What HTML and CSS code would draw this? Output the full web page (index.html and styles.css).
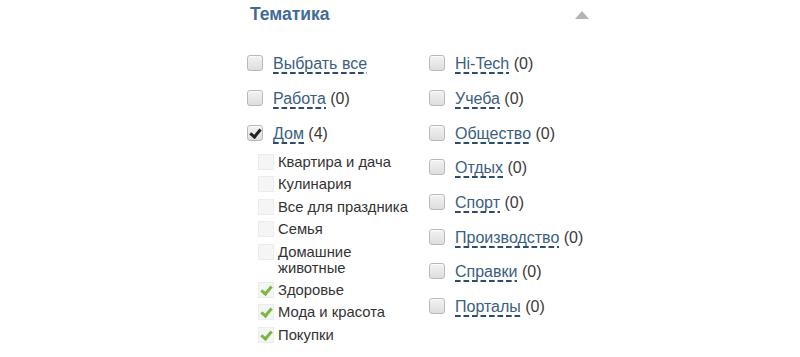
FILE: index.html
```html
<!DOCTYPE html>
<html lang="ru">
<head>
<meta charset="utf-8">
<link rel="stylesheet" href="styles.css">
</head>
<body>
<div class="panel">
  <div class="head">
    <span class="title">Тематика</span>
    <span class="arrow"></span>
  </div>
  <div class="cols">
    <div class="col col-left">
      <div class="row"><span class="cb"></span><span class="lbl"><a class="lnk">Выбрать все</a></span></div>
      <div class="row"><span class="cb"></span><span class="lbl"><a class="lnk">Работа</a> (0)</span></div>
      <div class="row"><span class="cb on"></span><span class="lbl"><a class="lnk">Дом</a> (4)</span></div>
      <div class="subs">
        <div class="sub"><span class="scb"></span><span class="slbl">Квартира и дача</span></div>
        <div class="sub"><span class="scb"></span><span class="slbl">Кулинария</span></div>
        <div class="sub"><span class="scb"></span><span class="slbl">Все для праздника</span></div>
        <div class="sub"><span class="scb"></span><span class="slbl">Семья</span></div>
        <div class="sub"><span class="scb"></span><span class="slbl">Домашние<br>животные</span></div>
        <div class="sub"><span class="scb on"></span><span class="slbl">Здоровье</span></div>
        <div class="sub"><span class="scb on"></span><span class="slbl">Мода и красота</span></div>
        <div class="sub"><span class="scb on"></span><span class="slbl">Покупки</span></div>
      </div>
    </div>
    <div class="col col-right">
      <div class="row"><span class="cb"></span><span class="lbl"><a class="lnk">Hi-Tech</a> (0)</span></div>
      <div class="row"><span class="cb"></span><span class="lbl"><a class="lnk">Учеба</a> (0)</span></div>
      <div class="row"><span class="cb"></span><span class="lbl"><a class="lnk">Общество</a> (0)</span></div>
      <div class="row"><span class="cb"></span><span class="lbl"><a class="lnk">Отдых</a> (0)</span></div>
      <div class="row"><span class="cb"></span><span class="lbl"><a class="lnk">Спорт</a> (0)</span></div>
      <div class="row"><span class="cb"></span><span class="lbl"><a class="lnk">Производство</a> (0)</span></div>
      <div class="row"><span class="cb"></span><span class="lbl"><a class="lnk">Справки</a> (0)</span></div>
      <div class="row"><span class="cb"></span><span class="lbl"><a class="lnk">Порталы</a> (0)</span></div>
    </div>
  </div>
</div>
</body>
</html>
```
FILE: styles.css
```css
html, body {
  margin: 0;
  padding: 0;
  background: #fff;
}
body {
  font-family: "Liberation Sans", Arial, sans-serif;
  color: #333;
}
.panel {
  width: 352px;
  margin-left: 247px;
}
.head {
  display: flex;
  align-items: center;
  justify-content: space-between;
  height: 28px;
  padding-left: 3px;
}
.title {
  font-size: 17.5px;
  font-weight: bold;
  color: #3f6b96;
}
.arrow {
  width: 0;
  height: 0;
  border-left: 7px solid transparent;
  border-right: 7px solid transparent;
  border-bottom: 8px solid #b3b3b3;
  margin-right: 10px;
  margin-top: 2px;
}
.cols {
  display: flex;
  padding-top: 18px;
}
.col-left {
  width: 182px;
}
.row {
  display: flex;
  align-items: center;
  height: 34.7px;
  font-size: 16px;
}
.cb {
  box-sizing: border-box;
  width: 16px;
  height: 16px;
  border: 1px solid #b9b9b9;
  border-radius: 3px;
  background: linear-gradient(#f2f2f2, #dedede);
  box-shadow: inset 0 1px 1px rgba(255,255,255,0.8);
  margin-right: 10px;
  position: relative;
  flex: none;
}
.cb.on::after {
  content: "";
  position: absolute;
  left: 4px;
  top: 1px;
  width: 4px;
  height: 8px;
  border-right: 3px solid #222;
  border-bottom: 3px solid #222;
  transform: rotate(40deg);
}
.lbl {
  color: #3a3a3a;
  line-height: 18px;
  margin-top: 2px;
}
.lnk {
  color: #3a5e82;
  text-decoration: none;
  padding-bottom: 2px;
  background-image: linear-gradient(to right, #2c4d6e 65%, transparent 65%);
  background-size: 8.5px 2px;
  background-repeat: repeat-x;
  background-position: 0 100%;
}
.subs {
  padding-left: 11px;
  padding-top: 4px;
}
.sub {
  display: flex;
  align-items: flex-start;
  font-size: 14.8px;
  line-height: 16px;
  margin-bottom: 6.4px;
}
.scb {
  box-sizing: border-box;
  width: 16px;
  height: 16px;
  border: 1px solid #ececec;
  background: #f5f5f5;
  margin-right: 4px;
  position: relative;
  flex: none;
}
.scb.on::after {
  content: "";
  position: absolute;
  left: 4px;
  top: 1px;
  width: 4px;
  height: 8px;
  border-right: 3px solid #78b843;
  border-bottom: 3px solid #78b843;
  transform: rotate(40deg);
}
.slbl {
  color: #333;
}
```
